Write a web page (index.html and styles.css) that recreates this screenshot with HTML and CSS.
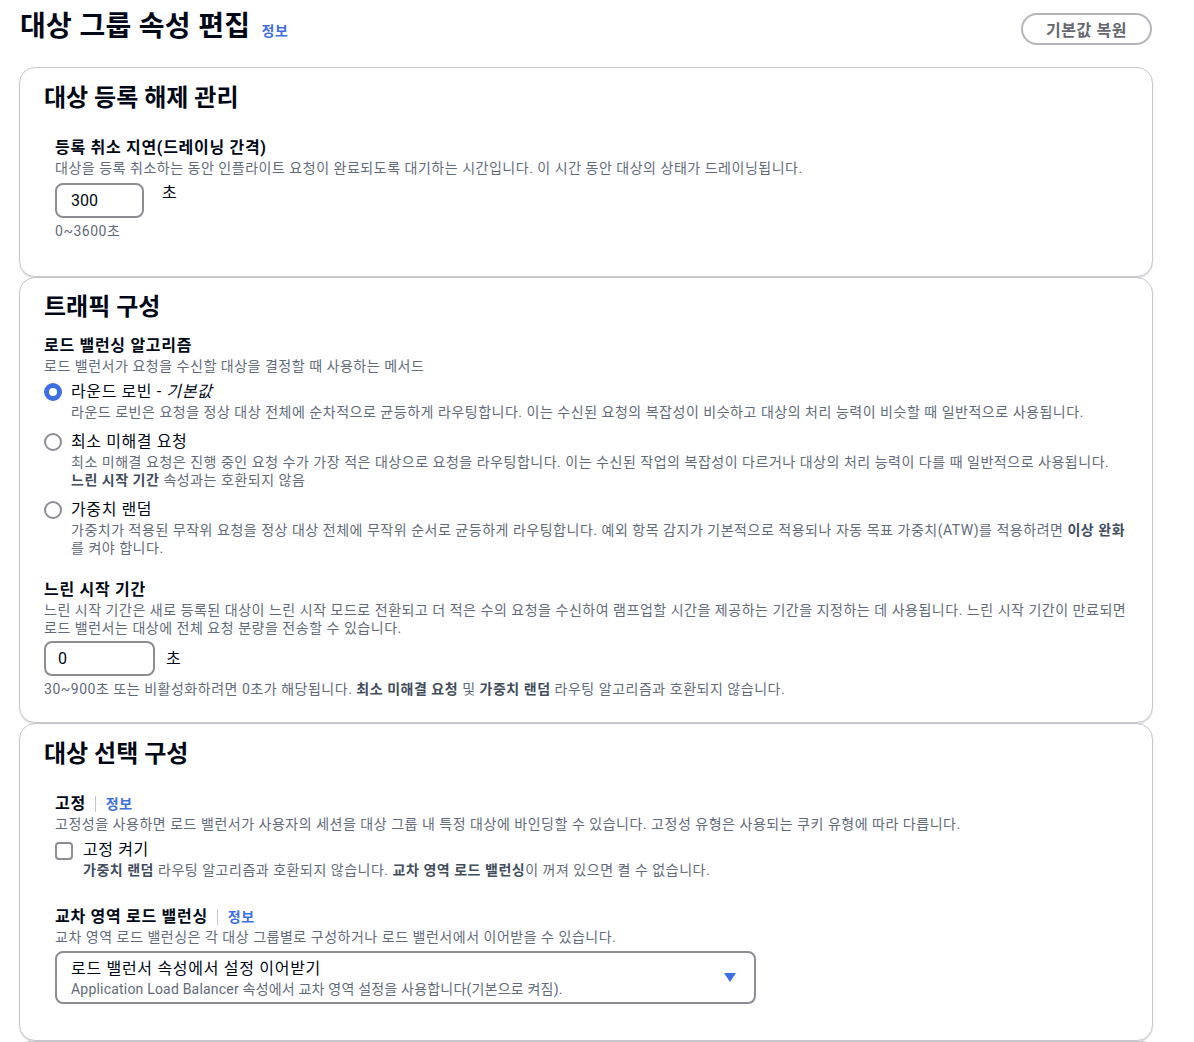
FILE: index.html
```html
<!DOCTYPE html>
<html lang="ko">
<head>
<meta charset="UTF-8">
<meta name="viewport" content="width=device-width, initial-scale=1.0">
<title>대상 그룹 속성 편집</title>
<link rel="stylesheet" href="styles.css">
</head>
<body>

<div class="page">
  <div class="page-header">
    <h1 class="page-title">대상 그룹 속성 편집 <a class="info-link" href="#">정보</a></h1>
    <button type="button" class="btn-reset">기본값 복원</button>
  </div>

  <section class="card">
    <div class="indent">
      <h2 class="card-title">대상 등록 해제 관리</h2>
      <div class="field">
        <div class="field-label">등록 취소 지연(드레이닝 간격)</div>
        <div class="field-desc">대상을 등록 취소하는 동안 인플라이트 요청이 완료되도록 대기하는 시간입니다. 이 시간 동안 대상의 상태가 드레이닝됩니다.</div>
        <div class="input-row top">
          <input type="text" class="text-input small" value="300">
          <span class="unit">초</span>
        </div>
        <div class="field-help">0~3600초</div>
      </div>
    </div>
  </section>

  <section class="card">
    <h2 class="card-title">트래픽 구성</h2>
    <div class="field">
      <div class="field-label">로드 밸런싱 알고리즘</div>
      <div class="field-desc">로드 밸런서가 요청을 수신할 대상을 결정할 때 사용하는 메서드</div>
      <div class="radio-group">
        <label class="radio-item">
          <span class="radio checked"></span>
          <span class="radio-text">
            <span class="radio-label">라운드 로빈 - <i>기본값</i></span>
            <span class="radio-desc">라운드 로빈은 요청을 정상 대상 전체에 순차적으로 균등하게 라우팅합니다. 이는 수신된 요청의 복잡성이 비슷하고 대상의 처리 능력이 비슷할 때 일반적으로 사용됩니다.</span>
          </span>
        </label>
        <label class="radio-item">
          <span class="radio"></span>
          <span class="radio-text">
            <span class="radio-label">최소 미해결 요청</span>
            <span class="radio-desc">최소 미해결 요청은 진행 중인 요청 수가 가장 적은 대상으로 요청을 라우팅합니다. 이는 수신된 작업의 복잡성이 다르거나 대상의 처리 능력이 다를 때 일반적으로 사용됩니다.<br><b>느린 시작 기간</b> 속성과는 호환되지 않음</span>
          </span>
        </label>
        <label class="radio-item">
          <span class="radio"></span>
          <span class="radio-text">
            <span class="radio-label">가중치 랜덤</span>
            <span class="radio-desc">가중치가 적용된 무작위 요청을 정상 대상 전체에 무작위 순서로 균등하게 라우팅합니다. 예외 항목 감지가 기본적으로 적용되나 자동 목표 가중치(ATW)를 적용하려면 <b>이상 완화</b><br>를 켜야 합니다.</span>
          </span>
        </label>
      </div>
    </div>

    <div class="field spaced">
      <div class="field-label">느린 시작 기간</div>
      <div class="field-desc">느린 시작 기간은 새로 등록된 대상이 느린 시작 모드로 전환되고 더 적은 수의 요청을 수신하여 램프업할 시간을 제공하는 기간을 지정하는 데 사용됩니다. 느린 시작 기간이 만료되면<br>로드 밸런서는 대상에 전체 요청 분량을 전송할 수 있습니다.</div>
      <div class="input-row">
        <input type="text" class="text-input" value="0">
        <span class="unit">초</span>
      </div>
      <div class="field-help">30~900초 또는 비활성화하려면 0초가 해당됩니다. <b>최소 미해결 요청</b> 및 <b>가중치 랜덤</b> 라우팅 알고리즘과 호환되지 않습니다.</div>
    </div>
  </section>

  <section class="card">
    <div class="indent">
      <h2 class="card-title">대상 선택 구성</h2>
      <div class="field">
        <div class="field-label">고정<span class="sep"></span><a class="info-link" href="#">정보</a></div>
        <div class="field-desc">고정성을 사용하면 로드 밸런서가 사용자의 세션을 대상 그룹 내 특정 대상에 바인딩할 수 있습니다. 고정성 유형은 사용되는 쿠키 유형에 따라 다릅니다.</div>
        <label class="check-item">
          <span class="checkbox"></span>
          <span class="radio-text">
            <span class="radio-label">고정 켜기</span>
            <span class="radio-desc"><b>가중치 랜덤</b> 라우팅 알고리즘과 호환되지 않습니다. <b>교차 영역 로드 밸런싱</b>이 꺼져 있으면 켤 수 없습니다.</span>
          </span>
        </label>
      </div>

      <div class="field spaced-lg">
        <div class="field-label">교차 영역 로드 밸런싱<span class="sep"></span><a class="info-link" href="#">정보</a></div>
        <div class="field-desc">교차 영역 로드 밸런싱은 각 대상 그룹별로 구성하거나 로드 밸런서에서 이어받을 수 있습니다.</div>
        <div class="select-box">
          <div class="select-text">
            <div class="select-main">로드 밸런서 속성에서 설정 이어받기</div>
            <div class="select-sub">Application Load Balancer 속성에서 교차 영역 설정을 사용합니다(기본으로 켜짐).</div>
          </div>
          <svg class="caret" width="12" height="10" viewBox="0 0 12 10"><path d="M0 0 H12 L6 9 Z" fill="#3e6fe2"/></svg>
        </div>
      </div>
    </div>
  </section>

  <section class="card last"></section>
</div>

</body>
</html>
```

FILE: styles.css
```css
body {
  margin: 0;
  font-family: Roboto, "Noto Sans CJK KR", sans-serif;
  color: #000716;
  background: #fff;
}
.page {
  width: 1134px;
  margin-left: 19px;
}
.page-header {
  display: flex;
  justify-content: space-between;
  align-items: flex-start;
  height: 67px;
  padding-top: 11px;
  box-sizing: border-box;
}
.page-title {
  margin: 0 0 0 1px;
  font-size: 28px;
  line-height: 32px;
  font-weight: 700;
  letter-spacing: 0.3px;
}
.info-link {
  font-size: 14px;
  font-weight: 600;
  color: #3e6fe2;
  text-decoration: none;
  letter-spacing: 0.5px;
  margin-left: 4px;
}
.btn-reset {
  margin-top: 2px;
  margin-right: 1px;
  width: 131px;
  height: 32px;
  border: 2px solid #b4b4bb;
  border-radius: 16px;
  background: #fff;
  color: #656871;
  font-family: inherit;
  font-size: 16px;
  font-weight: 700;
  letter-spacing: 0.6px;
}

.card {
  border: 1px solid #c6c6cd;
  border-radius: 16px;
  box-shadow: 0 1px 1px rgba(0, 7, 22, 0.18);
  padding: 15px 24px 24px;
}
.card.last {
  height: 20px;
  padding: 0;
  border-bottom: none;
}
.indent {
  padding: 11px 0 12px 11px;
}
.card-title {
  margin: 0 0 14px;
  font-size: 24px;
  line-height: 28px;
  font-weight: 700;
}
.indent .card-title {
  margin: -10px 0 25px -11px;
}

.field-label {
  font-size: 16px;
  line-height: 22px;
  font-weight: 700;
  letter-spacing: 0.7px;
  display: flex;
  align-items: center;
}
.field-label .info-link {
  margin-left: 0;
}
.sep {
  display: inline-block;
  width: 1px;
  height: 16px;
  background: #c6c6cd;
  margin: 0 10px 0 9px;
}
.field-desc,
.field-help,
.radio-desc {
  font-size: 14px;
  line-height: 18px;
  color: #5f6b7a;
  letter-spacing: 0.52px;
}
.field-desc b,
.field-help b,
.radio-desc b {
  color: #414d5c;
}
.field.spaced {
  margin-top: 22px;
}
.field.spaced-lg {
  margin-top: 27px;
}
.input-row {
  display: flex;
  align-items: center;
  margin-top: 4px;
  gap: 11px;
}
.input-row.top {
  align-items: flex-start;
  margin-top: 6px;
  gap: 18px;
}
.text-input {
  width: 111px;
  height: 35px;
  box-sizing: border-box;
  border: 2px solid #8c8c94;
  border-radius: 8px;
  padding: 0 12px;
  font-family: inherit;
  font-size: 16px;
  color: #000716;
  background: #fff;
}
.text-input.small {
  width: 89px;
  padding-left: 14px;
}
.unit {
  font-size: 16px;
  line-height: 20px;
}
.field-help {
  margin-top: 4px;
}

.radio-group {
  margin-top: 6px;
  display: flex;
  flex-direction: column;
  gap: 10px;
}
.radio-item,
.check-item {
  display: flex;
  align-items: flex-start;
}
.radio {
  flex: none;
  width: 18px;
  height: 18px;
  box-sizing: border-box;
  border: 2px solid #8c8c94;
  border-radius: 50%;
  margin: 2px 9px 0 0;
}
.radio.checked {
  border: 5px solid #3e6fe2;
}
.radio-text {
  display: flex;
  flex-direction: column;
}
.radio-label {
  font-size: 16px;
  line-height: 22px;
  letter-spacing: 0.6px;
}
.check-item {
  margin-top: 6px;
}
.checkbox {
  flex: none;
  width: 18px;
  height: 18px;
  box-sizing: border-box;
  border: 2px solid #8c8c94;
  border-radius: 4px;
  margin: 3px 10px 0 0;
}

.select-box {
  margin-top: 5px;
  width: 701px;
  height: 53px;
  box-sizing: border-box;
  border: 2px solid #8c8c94;
  border-radius: 8px;
  padding: 4px 18px 4px 14px;
  display: flex;
  align-items: center;
  justify-content: space-between;
}
.select-main {
  font-size: 16px;
  line-height: 22px;
  letter-spacing: 0.7px;
}
.select-sub {
  font-size: 14px;
  line-height: 18px;
  color: #5f6b7a;
  letter-spacing: 0.2px;
}
.caret {
  flex: none;
}
```
